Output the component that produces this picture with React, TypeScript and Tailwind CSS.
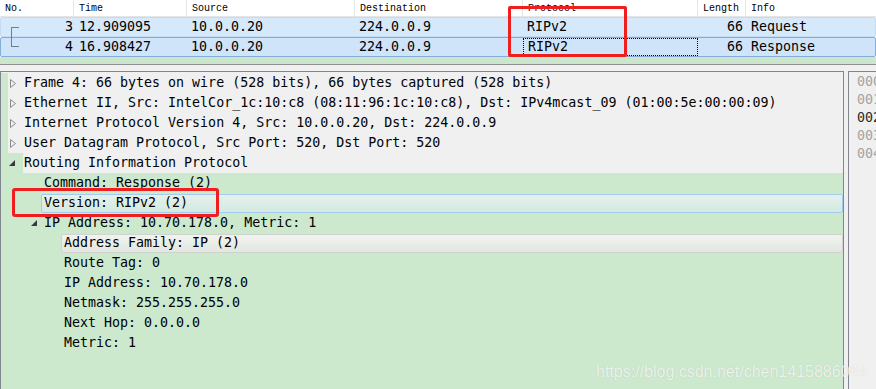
import React from "react";

const mono = { fontFamily: '"DejaVu Sans Mono", "Liberation Mono", monospace' };

const cols = [
  { label: "No.", w: "w-[74px]" },
  { label: "Time", w: "w-[113px]" },
  { label: "Source", w: "w-[168px]" },
  { label: "Destination", w: "w-[168px]" },
  { label: "Protocol", w: "w-[175px]" },
  { label: "Length", w: "w-[48px]" },
  { label: "Info", w: "flex-1" },
];

const packets = [
  { no: "3", time: "12.909095", src: "10.0.0.20", dst: "224.0.0.9", proto: "RIPv2", len: "66", info: "Request" },
  { no: "4", time: "16.908427", src: "10.0.0.20", dst: "224.0.0.9", proto: "RIPv2", len: "66", info: "Response" },
];

function Collapsed() {
  return (
    <svg width="7" height="9" viewBox="0 0 7 9" className="shrink-0">
      <path d="M0.5 0.5 L5.5 4.5 L0.5 8.5 Z" fill="none" stroke="#8a8a8a" strokeWidth="1" />
    </svg>
  );
}

function Expanded() {
  return (
    <svg width="6" height="6" viewBox="0 0 6 6" className="shrink-0">
      <path d="M6 0 L6 6 L0 6 Z" fill="#3a3a3a" />
    </svg>
  );
}

function TopRow({ text }: { text: string }) {
  return (
    <div className="flex h-[20px]">
      <div className="w-[7px] bg-[#cce8cd]" />
      <div className="flex flex-1 items-center bg-[#f0f0f0]">
        <span className="ml-[2px] w-[14px] flex items-center"><Collapsed /></span>
        <span className="whitespace-nowrap">{text}</span>
      </div>
    </div>
  );
}

function Leaf({ text, indent }: { text: string; indent: string }) {
  return (
    <div className={`flex h-[20px] items-center whitespace-nowrap ${indent}`}>{text}</div>
  );
}

export default function App() {
  return (
    <div className="relative w-[876px] h-[389px] overflow-hidden bg-[#f0f0f0] text-black" style={mono}>
      {/* packet list */}
      <div className="bg-white">
        <div className="flex h-[17px] border-b border-[#e5e5e5] text-[10px] items-center" style={{ fontFamily: '"Liberation Mono", monospace' }}>
          {cols.map((c, i) => (
            <div key={c.label} className={`${c.w} h-full flex items-center pl-[5px] ${i < cols.length - 1 ? "border-r border-[#e5e5e5]" : ""}`}>
              {c.label}
            </div>
          ))}
        </div>
        {packets.map((p, i) => (
          <div
            key={p.no}
            className={`flex h-[20px] items-center text-[13.3px] rounded-[2px] border ${i === 1 ? "border-[#84acd8] bg-[#cfe4f9]" : "border-[#c3dcf4] bg-[#d6e9fb]"}`}
          >
            <div className="w-[73px] relative flex items-center justify-end pr-[1px] h-full">
              {i === 0 ? (
                <span className="absolute left-[10px] top-[9px] w-[8px] h-[11px] border-l border-t border-[#6f7f8c]" />
              ) : (
                <span className="absolute left-[10px] top-0 w-[8px] h-[9px] border-l border-b border-[#6f7f8c]" />
              )}
              {p.no}
            </div>
            <div className="w-[113px] pl-[5px]">{p.time}</div>
            <div className="w-[168px] pl-[4px]">{p.src}</div>
            <div className="w-[168px] pl-[4px]">{p.dst}</div>
            <div className={`w-[175px] h-full flex items-center pl-[4px] ${i === 1 ? "border border-dotted border-black" : ""}`}>{p.proto}</div>
            <div className="w-[48px] text-right pr-[3px]">{p.len}</div>
            <div className="flex-1 pl-[5px]">{p.info}</div>
          </div>
        ))}
      </div>
      <div className="h-[7px] bg-[#cbe6cc]" />
      <div className="h-px bg-[#8f8f8f]" />
      <div className="h-[6px]" />

      {/* detail + bytes panes */}
      <div className="flex h-[318px] text-[13.3px]">
        <div className="w-[844px] flex flex-col border-l border-r border-t border-[#82878f] pt-px">
          <TopRow text="Frame 4: 66 bytes on wire (528 bits), 66 bytes captured (528 bits)" />
          <TopRow text="Ethernet II, Src: IntelCor_1c:10:c8 (08:11:96:1c:10:c8), Dst: IPv4mcast_09 (01:00:5e:00:00:09)" />
          <TopRow text="Internet Protocol Version 4, Src: 10.0.0.20, Dst: 224.0.0.9" />
          <TopRow text="User Datagram Protocol, Src Port: 520, Dst Port: 520" />
          <div className="flex h-[20px]">
            <div className="w-[22px] bg-[#cce8cd] flex items-center pl-[8px]"><Expanded /></div>
            <div className="flex flex-1 items-center bg-[#f0f0f0] pl-[1px]">Routing Information Protocol</div>
          </div>
          <div className="flex-1 bg-[#cce8cd]">
            <Leaf text="Command: Response (2)" indent="pl-[43px]" />
            <div className="flex h-[20px] items-center pl-[40px]">
              <div className="flex-1 h-[19px] flex items-center pl-[2px] rounded-[2px] border border-[#a3cdee] bg-gradient-to-b from-[#e6f0ec] to-[#d3eae1]">
                Version: RIPv2 (2)
              </div>
            </div>
            <div className="flex h-[20px] items-center">
              <span className="ml-[30px] w-[13px] flex items-center"><Expanded /></span>
              <span className="whitespace-nowrap">IP Address: 10.70.178.0, Metric: 1</span>
            </div>
            <div className="flex h-[20px] items-center pl-[60px]">
              <div className="flex-1 h-[19px] flex items-center pl-[2px] rounded-[2px] border border-[#d0d3cf] bg-gradient-to-b from-[#f1f3ef] to-[#e2e7e0]">
                Address Family: IP (2)
              </div>
            </div>
            <Leaf text="Route Tag: 0" indent="pl-[63px]" />
            <Leaf text="IP Address: 10.70.178.0" indent="pl-[63px]" />
            <Leaf text="Netmask: 255.255.255.0" indent="pl-[63px]" />
            <Leaf text="Next Hop: 0.0.0.0" indent="pl-[63px]" />
            <Leaf text="Metric: 1" indent="pl-[63px]" />
          </div>
        </div>
        <div className="w-[4px]" />
        <div className="flex-1 border-l border-t border-[#82878f] pt-[1px] pl-[8px] overflow-hidden">
          {["0000", "0010", "0020", "0030", "0040"].map((o) => (
            <div key={o} className={`h-[18px] flex items-center whitespace-nowrap ${o === "0020" ? "text-[#2a2a2a]" : "text-[#a3a3a3]"}`}>
              {o}
            </div>
          ))}
        </div>
      </div>

      {/* annotations */}
      <div className="absolute left-[508px] top-[6px] w-[119px] h-[51px] border-[3px] border-[#f01f1f] rounded-[2px]" />
      <div className="absolute left-[12px] top-[188px] w-[207px] h-[29px] border-[3px] border-[#f01f1f] rounded-[3px]" />
      <div
        className="absolute left-[596px] top-[360px] text-[16px] text-white/75 whitespace-nowrap"
        style={{ fontFamily: '"Liberation Sans", Arial, sans-serif', textShadow: "0 0 1px rgba(0,0,0,0.15)" }}
      >
        https://blog.csdn.net/chen1415886044
      </div>
    </div>
  );
}
